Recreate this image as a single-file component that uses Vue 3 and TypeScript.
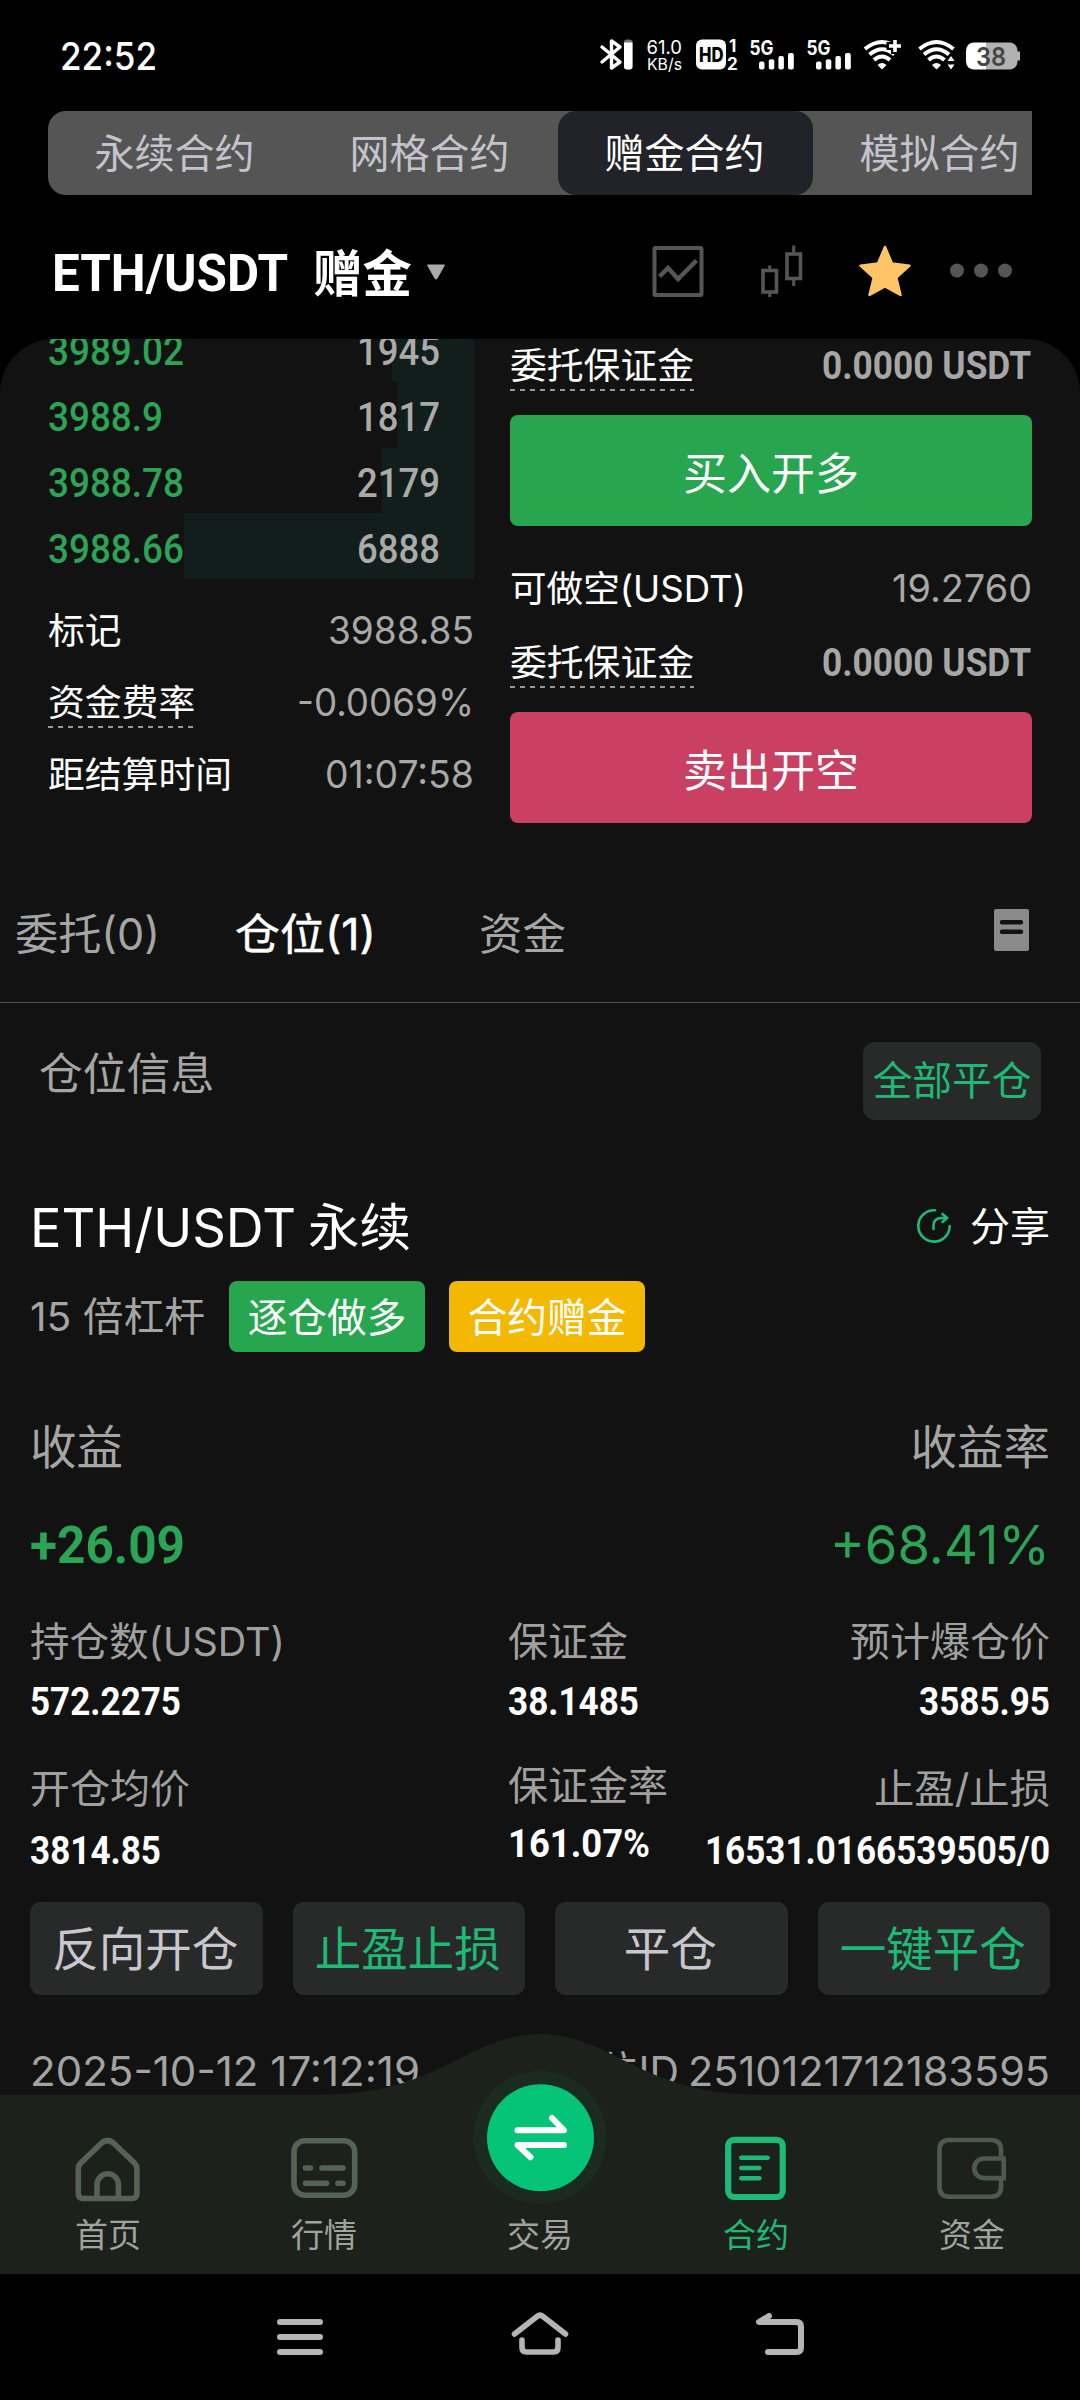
<script setup lang="ts">
import type { Directive } from 'vue'

interface BookRow { price: string; priceWidth: number; size: string; depth: number }
interface Metric { label: string; labelWidth: number; value: string; valueWidth: number; align?: 'mid' | 'end' }

// Condenses or expands a single line of text so that it takes the given width.
const vFit: Directive<HTMLElement, number> = {
  mounted(el, { value }) {
    const natural = el.getBoundingClientRect().width
    el.style.transform = `scaleX(${value / natural})`
    el.style.marginRight = `${value - natural}px`
  },
}

const modes = ['永续合约', '网格合约', '赠金合约', '模拟合约']
const activeMode = '赠金合约'

const book: BookRow[] = [
  { price: '3989.02', priceWidth: 136, size: '1945', depth: 82 },
  { price: '3988.9', priceWidth: 115, size: '1817', depth: 76.5 },
  { price: '3988.78', priceWidth: 136, size: '2179', depth: 92 },
  { price: '3988.66', priceWidth: 136, size: '6888', depth: 290 },
]

const stats = [
  { label: '标记', value: '3988.85', width: 146, hint: false },
  { label: '资金费率', value: '-0.0069%', width: 177, hint: true },
  { label: '距结算时间', value: '01:07:58', width: 149, hint: false },
]

const metrics: Metric[][] = [
  [
    { label: '持仓数(USDT)', labelWidth: 255, value: '572.2275', valueWidth: 151 },
    { label: '保证金', labelWidth: 120, value: '38.1485', valueWidth: 131, align: 'mid' },
    { label: '预计爆仓价', labelWidth: 200, value: '3585.95', valueWidth: 131, align: 'end' },
  ],
  [
    { label: '开仓均价', labelWidth: 160, value: '3814.85', valueWidth: 131 },
    { label: '保证金率', labelWidth: 160, value: '161.07%', valueWidth: 142, align: 'mid' },
    { label: '止盈/止损', labelWidth: 176, value: '16531.0166539505/0', valueWidth: 345, align: 'end' },
  ],
]

const actions = [
  { text: '反向开仓', accent: false },
  { text: '止盈止损', accent: true },
  { text: '平仓', accent: false },
  { text: '一键平仓', accent: true },
]
</script>

<template>
  <div class="screen">
    <header class="status">
      <span v-fit="97" class="clock">22:52</span>
      <svg class="status-icons" width="424" height="40" viewBox="597 35.5 424 40" fill="#fff">
        <path d="M602 46.5 L620 61.5 L611.5 67.5 V40.5 L620 46.5 L602 61.5" fill="none" stroke="#fff" stroke-width="3.4" stroke-linejoin="round" stroke-linecap="round" />
        <rect x="624" y="39" width="8.5" height="30" rx="3" fill="#777" />
        <path d="M624 42h8.500v24a3 3 0 0 1-3 3h-2.500a3 3 0 0 1-3-3z" />
        <text x="646.500" y="53" font-size="19" textLength="35.500" lengthAdjust="spacingAndGlyphs">61.0</text>
        <text x="647" y="69" font-size="16.500" textLength="35" lengthAdjust="spacingAndGlyphs">KB/s</text>
        <rect x="696" y="39" width="30" height="30" rx="6" />
        <text x="699" y="61" font-size="19.500" font-weight="800" fill="#000" textLength="24.500" lengthAdjust="spacingAndGlyphs">HD</text>
        <text x="729" y="51.500" font-size="17" font-weight="700">1</text>
        <text x="727" y="69" font-size="17" font-weight="700">2</text>
        <g v-for="dx in [0, 57]" :key="dx" :transform="`translate(${dx} 0)`">
          <text x="749.500" y="54" font-size="20" font-weight="700" textLength="24" lengthAdjust="spacingAndGlyphs">5G</text>
          <rect x="759" y="61" width="5.500" height="8" rx="2" />
          <rect x="768.800" y="58.700" width="5.500" height="10.300" rx="2" />
          <rect x="778.400" y="55.500" width="5.500" height="13.500" rx="2" />
          <rect x="788" y="52.500" width="5.800" height="16.500" rx="2" />
        </g>
        <g v-for="cx in [882, 936.5]" :key="cx" :transform="`translate(${cx} 0)`">
          <path d="M-4.500 64.500Q0 60.500 4.500 64.500L0 69z" />
          <g fill="none" stroke="#fff" stroke-width="4">
            <path d="M-17 48.500Q0 34.500 17 48.500" />
            <path d="M-12.500 54Q0 43.500 12.500 54" />
            <path d="M-8 59.500Q0 52.500 8 59.500" />
          </g>
        </g>
        <path d="M895 37.500v16M886.500 45.500h17" stroke="#000" stroke-width="8" />
        <path d="M895 39.500v12M889 45.500h12" stroke="#fff" stroke-width="3.600" />
        <path d="M951 52l7 17h-14z" fill="#000" />
        <path d="M951 55.500l3.500 5h-7zM951 69l3.500-5h-7z" />
        <path d="M974 42h12v27h-12a8 8 0 0 1-8-8V50a8 8 0 0 1 8-8z" />
        <path d="M986 42h23.500a8 8 0 0 1 8 8v1h2.500v9h-2.500v1a8 8 0 0 1-8 8H986z" fill="#b2b2b2" />
        <text x="976" y="65" font-size="25.500" font-weight="600" fill="#444" textLength="30" lengthAdjust="spacingAndGlyphs">38</text>
      </svg>
    </header>

    <nav class="modes">
      <span v-for="m in modes" :key="m" class="mode" :class="{ on: m === activeMode }">{{ m }}</span>
    </nav>

    <section class="pair">
      <span v-fit="236" class="pair-name">ETH/USDT</span>
      <span class="pair-kind">赠金</span>
      <svg class="caret" width="20" height="16" viewBox="0 0 20 16"><path d="M1.500 1h17L11 14.500q-1 1-2 0z" fill="#aaa" stroke="#aaa" stroke-linejoin="round" /></svg>
      <svg class="tool" width="52" height="56" viewBox="652 244 52 56" fill="none" stroke="#555">
        <rect x="654.500" y="248" width="47" height="47" rx="1" stroke-width="4" />
        <path d="M659.500 276.500l8.500-8.500 10 11 18.500-18.500" stroke-width="4.500" />
      </svg>
      <svg class="tool" width="43" height="56" viewBox="760 244 43 56" fill="none" stroke="#555" stroke-width="3.600">
        <rect x="763" y="270.500" width="13.500" height="21.500" />
        <path d="M769.700 265.500v4M769.700 292v5" stroke-width="3" />
        <rect x="787" y="254" width="13.500" height="24.500" />
        <path d="M793.700 245.500v8M793.700 279v7" stroke-width="3" />
      </svg>
      <svg class="tool" width="52" height="56" viewBox="859 244 52 56">
        <path d="M885 247l7 16.500 17.500 2.200-13.200 12 4.200 17.300-15.500-8.500-15.500 8.500 4.200-17.300-13.200-12 17.500-2.200z" fill="#ffc466" stroke="#ffc466" stroke-width="2.500" stroke-linejoin="round" />
      </svg>
      <svg class="dots" width="64" height="56" viewBox="949 244 64 56" fill="#555">
        <circle cx="957" cy="270.500" r="7" /><circle cx="981" cy="270.500" r="7" /><circle cx="1005" cy="270.500" r="7" />
      </svg>
    </section>

    <main class="panel">
      <section class="market">
        <div class="book">
          <div v-for="r in book" :key="r.price" class="book-row">
            <i class="depth" :style="{ width: r.depth + 'px' }"></i>
            <span v-fit="r.priceWidth" class="price">{{ r.price }}</span>
            <span v-fit="83" class="size">{{ r.size }}</span>
          </div>
          <div class="stats">
            <div v-for="s in stats" :key="s.label" class="stat">
              <span class="name" :class="{ hint: s.hint }">{{ s.label }}</span>
              <span v-fit="s.width" class="num">{{ s.value }}</span>
            </div>
          </div>
        </div>
        <div class="order">
          <div class="order-row">
            <span class="name hint">委托保证金</span>
            <span v-fit="210" class="cost">0.0000 USDT</span>
          </div>
          <button class="trade buy">买入开多</button>
          <div class="order-row avail">
            <span v-fit="236" class="name">可做空(USDT)</span>
            <span v-fit="140" class="num">19.2760</span>
          </div>
          <div class="order-row second">
            <span class="name hint">委托保证金</span>
            <span v-fit="210" class="cost">0.0000 USDT</span>
          </div>
          <button class="trade sell">卖出开空</button>
        </div>
      </section>

      <nav class="tabs">
        <span v-fit="145" class="tab">委托(0)</span>
        <span v-fit="141" class="tab on">仓位(1)</span>
        <span class="tab last">资金</span>
        <svg class="records" width="35" height="42" viewBox="0 0 35 42">
          <rect width="35" height="42" rx="2" fill="#8a8a8a" />
          <path d="M8 13.200h19M8 22.800h19" stroke="#121212" stroke-width="4.400" stroke-linecap="round" />
        </svg>
      </nav>

      <section class="heading">
        <span class="heading-text">仓位信息</span>
        <button class="close-all">全部平仓</button>
      </section>

      <article class="position">
        <div class="title-row">
          <span v-fit="266" class="symbol">ETH/USDT</span>
          <span class="perp">永续</span>
          <span class="share">
            <svg width="38" height="38" viewBox="915 1207 38 38" fill="none" stroke="#1db975" stroke-width="2.600" stroke-linecap="round" stroke-linejoin="round">
              <path d="M935 1209.300a15.700 15.700 0 1 0 14.700 15.700" />
              <path d="M933.500 1228v-3q0-8 8-8h5M942.500 1213l4.800 4-4.800 4" />
            </svg>
            分享
          </span>
        </div>
        <div class="tag-row">
          <span v-fit="175" class="leverage">15 倍杠杆</span>
          <span class="tag long">逐仓做多</span>
          <span class="tag bonus">合约赠金</span>
        </div>
        <div class="profit labels"><span>收益</span><span>收益率</span></div>
        <div class="profit values">
          <span v-fit="155" class="gain">+26.09</span>
          <span v-fit="220" class="rate">+68.41%</span>
        </div>
        <div v-for="(row, i) in metrics" :key="i" class="metrics" :class="{ lower: i === 1 }">
          <div v-for="m in row" :key="m.label" class="metric" :class="m.align">
            <span v-fit="m.labelWidth" class="metric-label">{{ m.label }}</span>
            <span v-fit="m.valueWidth" class="metric-value">{{ m.value }}</span>
          </div>
        </div>
        <div class="actions">
          <button v-for="a in actions" :key="a.text" class="action" :class="{ accent: a.accent }">{{ a.text }}</button>
        </div>
        <div class="meta">
          <span v-fit="390">2025-10-12 17:12:19</span>
          <span class="meta-id"><span v-fit="122">仓位ID</span><span v-fit="362">2510121712183595</span></span>
        </div>
      </article>
    </main>

    <footer class="dock">
      <svg class="dock-bg" width="1080" height="240" viewBox="0 0 1080 240">
        <path d="M0 60.700H320C440 60.700 468 0 540 0S640 60.700 760 60.700H1080V240H0z" fill="#1c211c" />
      </svg>
      <div class="dock-item">
        <svg width="72" height="72" viewBox="72 2134 72 72" fill="none" stroke="#566256" stroke-width="5.600">
          <path d="M78.300 2193.500V2168.500q0-3 2.200-5.200L101.500 2143q6-5 12 0L134.700 2163.300q2.200 2.200 2.200 5.200V2193.500q0 5-5 5H83.300q-5 0-5-5z" />
          <path d="M97 2198V2184.500a10.700 10.700 0 0 1 21.400 0V2198" />
        </svg>
        <span>首页</span>
      </div>
      <div class="dock-item">
        <svg width="72" height="72" viewBox="288.500 2134 72 72" fill="none" stroke="#566256" stroke-width="5.600" stroke-linecap="round">
          <rect x="294.500" y="2140.800" width="60.700" height="54.500" rx="11" />
          <path d="M306 2168h5M322.500 2168h21M306 2183.300h21M338.500 2183.300h5" />
        </svg>
        <span>行情</span>
      </div>
      <div class="dock-item">
        <svg width="136" height="136" viewBox="472.500 2070 136 136">
          <circle cx="540.500" cy="2137.500" r="66.500" fill="#1c2b1f" />
          <circle cx="541" cy="2137.800" r="53.500" fill="#06c477" />
          <path d="M518 2130.300H564.500L552.500 2118M564.500 2145H518L531 2157.300" fill="none" stroke="#fff" stroke-width="6" stroke-linecap="round" stroke-linejoin="round" />
        </svg>
        <span>交易</span>
      </div>
      <div class="dock-item on">
        <svg width="72" height="72" viewBox="720 2134 72 72" fill="none" stroke="#1db975" stroke-width="6.200">
          <rect x="728.200" y="2139.800" width="54.500" height="57.200" rx="6" />
          <path d="M741.200 2157.700h26.500M741.200 2168h18.200M741.200 2178.200h18.200" stroke-width="4.400" stroke-linecap="round" />
        </svg>
        <span>合约</span>
      </div>
      <div class="dock-item">
        <svg width="72" height="72" viewBox="936 2134 72 72" fill="none" stroke="#4f5a4f" stroke-width="4.600">
          <path d="M1001 2156.500V2150q0-10-10-10H949.500q-10 0-10 10v36.700q0 10 10 10H991q10 0 10-10V2180" />
          <path d="M1003.700 2158.500H984a9.800 9.800 0 0 0 0 19.600h19.700z" />
        </svg>
        <span>资金</span>
      </div>
    </footer>

    <div class="system-nav">
      <svg width="1080" height="126" viewBox="0 2274 1080 126" fill="none" stroke="#b5b5b5" stroke-width="6" stroke-linecap="round" stroke-linejoin="round">
        <path d="M280 2322h40M280 2337h40M280 2352h40" />
        <path d="M514.500 2334L537 2316.500q3-2.500 6 0L565.500 2334M522 2340v7.500q0 4.500 4.500 4.500h27q4.500 0 4.500-4.500V2340" stroke-width="5.600" />
        <path d="M769 2316L759 2322h37.500q4.500 0 4.500 4.500v21q0 4.500-4.500 4.500H768" />
      </svg>
    </div>
  </div>
</template>

<style>
body {
  background: #000;
}
</style>

<style scoped>
.screen {
  display: flex;
  flex-direction: column;
  width: 1080px;
  height: 2400px;
  overflow: hidden;
  background: #000;
  color: #fff;
  font-family: Inter, "Noto Sans CJK SC", sans-serif;
  white-space: nowrap;
}
.screen * {
  box-sizing: border-box;
}
span {
  display: block;
  flex-shrink: 0;
  transform-origin: left center;
}
svg {
  display: block;
  flex-shrink: 0;
}
button {
  padding: 0;
  border: 0;
  font: inherit;
  color: #fff;
}
.status {
  display: flex;
  align-items: center;
  justify-content: space-between;
  height: 111px;
  padding: 0 59px 0 60px;
}
.clock {
  font-size: 38.5px;
  line-height: 50px;
  font-weight: 500;
}
.modes {
  display: flex;
  width: 984px;
  height: 84px;
  margin-left: 48px;
  overflow: hidden;
  border-radius: 18px 0 0 18px;
  background: #555;
}
.mode {
  width: 255px;
  padding-right: 2px;
  border-radius: 18px;
  font-size: 40px;
  line-height: 86px;
  text-align: center;
  color: #c4c3cc;
}
.mode.on {
  background: #222328;
  color: #fff;
}
.pair {
  display: flex;
  align-items: center;
  height: 144px;
  padding: 10px 67px 0 52px;
}
.pair-name {
  padding-top: 2px;
  font-family: Roboto, sans-serif;
  font-size: 51px;
  font-weight: 700;
}
.pair-kind {
  margin-left: 25px;
  padding-top: 3px;
  font-size: 49.5px;
  line-height: 60px;
  font-weight: 700;
}
.caret {
  margin-left: 14px;
  margin-right: auto;
}
.tool {
  margin-right: 56px;
}
.dots {
  margin-left: -18px;
}
.panel {
  height: 1756px;
  flex-shrink: 0;
  overflow: hidden;
  border-radius: 54px 54px 0 0;
  background: #121212;
}
.market {
  display: flex;
  gap: 36px;
  height: 484px;
  padding-left: 48px;
}
.book {
  width: 426px;
  margin-top: -23px;
}
.book-row {
  position: relative;
  display: flex;
  align-items: center;
  justify-content: space-between;
  height: 65.8px;
  padding: 5px 34px 0 0;
  font-family: Roboto, sans-serif;
  font-size: 41px;
  font-weight: 500;
}
.depth {
  position: absolute;
  top: 0;
  right: 0;
  height: 100%;
  background: #111e1b;
}
.price {
  position: relative;
  color: #2ba455;
}
.size {
  position: relative;
  color: #aaa;
}
.stats {
  margin-top: 15px;
}
.stat {
  display: flex;
  align-items: center;
  justify-content: space-between;
  height: 72px;
}
.name {
  font-size: 36.8px;
  line-height: 51px;
}
.hint {
  background: repeating-linear-gradient(90deg, #999 0 5px, transparent 5px 10px) left bottom / 100% 2px no-repeat;
}
.num {
  font-size: 38.5px;
  color: #a8a8a8;
}
.order {
  width: 522px;
}
.order-row {
  display: flex;
  align-items: center;
  justify-content: space-between;
  height: 52px;
}
.order-row .name {
  line-height: 53px;
  height: 52px;
}
.avail {
  margin-top: 36px;
}
.second {
  margin-top: 22px;
}
.cost {
  padding-right: 1px;
  font-family: Roboto, sans-serif;
  font-size: 38.5px;
  font-weight: 700;
  color: #a6a6a6;
}
.trade {
  display: block;
  width: 100%;
  height: 111px;
  margin-top: 24px;
  border-radius: 8px;
  font-size: 44px;
}
.buy {
  background: #27a64f;
}
.sell {
  background: #c94063;
}
.tabs {
  display: flex;
  align-items: flex-start;
  height: 180px;
  padding: 83px 51px 0 15px;
  border-bottom: 1px solid #555;
}
.tab {
  font-size: 43.5px;
  line-height: 56px;
  color: #a5a5a5;
}
.tab.on {
  margin-left: 75px;
  color: #fff;
  -webkit-text-stroke: 0.5px #fff;
}
.tab.last {
  margin-left: 103px;
}
.records {
  margin: 3px 0 0 auto;
}
.heading {
  display: flex;
  align-items: flex-start;
  justify-content: space-between;
  margin-top: 39px;
  padding: 0 39px 0 39px;
}
.heading-text {
  padding-top: 1px;
  font-size: 43.8px;
  line-height: 64px;
  color: #a5a5a5;
}
.close-all {
  width: 178px;
  height: 78px;
  border-radius: 12px;
  background: #282a29;
  font-size: 39.7px;
  line-height: 76px;
  color: #1db975;
}
.position {
  padding: 0 30px;
}
.title-row {
  display: flex;
  align-items: center;
  height: 60px;
  margin-top: 77px;
}
.symbol {
  padding-top: 2px;
  font-size: 53px;
}
.perp {
  margin-left: 12px;
  font-size: 51.5px;
  line-height: 62px;
}
.share {
  display: flex;
  align-items: center;
  gap: 17px;
  margin-left: auto;
  font-size: 40px;
  line-height: 62px;
}
.tag-row {
  display: flex;
  align-items: center;
  height: 71px;
  margin-top: 24px;
}
.leverage {
  font-size: 40px;
  line-height: 70px;
  color: #a5a5a5;
}
.tag {
  width: 196px;
  border-radius: 8px;
  font-size: 39.7px;
  line-height: 74px;
  height: 71px;
  text-align: center;
}
.long {
  margin-left: 24px;
  background: #27a64f;
}
.bonus {
  margin-left: 24px;
  background: #f3b800;
}
.profit {
  display: flex;
  justify-content: space-between;
  line-height: 60px;
}
.labels {
  margin-top: 65px;
  font-size: 46.5px;
  color: #a5a5a5;
}
.values {
  margin-top: 38px;
  color: #2ba455;
}
.gain {
  font-family: Roboto, sans-serif;
  font-size: 52.5px;
  font-weight: 700;
}
.rate {
  font-size: 53.5px;
}
.metrics {
  display: grid;
  grid-template-columns: 478px 1fr auto;
  height: 107px;
  margin-top: 42px;
}
.metric {
  display: flex;
  flex-direction: column;
  align-items: flex-start;
  justify-content: space-between;
}
.metric.end {
  justify-self: end;
  align-items: flex-end;
}
.metric-label {
  font-size: 40px;
  line-height: 50px;
  color: #a0a0a0;
}
.metric-value {
  font-family: Roboto, sans-serif;
  font-size: 38.5px;
  line-height: 44px;
  font-weight: 700;
}
.lower {
  height: 109px;
  margin-top: 40px;
}
.lower .mid {
  height: 105px;
  margin-top: -3px;
}
.actions {
  display: grid;
  grid-template-columns: repeat(4, 1fr);
  gap: 30px;
  margin-top: 29px;
}
.action {
  height: 93px;
  padding-right: 2px;
  border-radius: 11px;
  background: #282a29;
  font-size: 46.5px;
  line-height: 92px;
  color: #c8c7d0;
}
.action.accent {
  color: #1db975;
}
.meta {
  display: flex;
  justify-content: space-between;
  margin-top: 51px;
  font-size: 41px;
  line-height: 50px;
  color: #a3a3a3;
}
.meta-id {
  display: flex;
  gap: 9px;
}
.dock {
  position: relative;
  display: grid;
  grid-template-columns: repeat(5, 1fr);
  flex-shrink: 0;
  height: 240px;
  margin-top: -61px;
}
.dock-bg {
  position: absolute;
  inset: 0;
}
.dock-item {
  position: relative;
  display: flex;
  flex-direction: column;
  align-items: center;
  justify-content: flex-end;
  padding-bottom: 19px;
  font-size: 33px;
  line-height: 40px;
  color: #a0a39f;
}
.dock-item span {
  margin-top: 9px;
}
.dock-item.on {
  color: #1db975;
}
.system-nav {
  height: 126px;
}
</style>
